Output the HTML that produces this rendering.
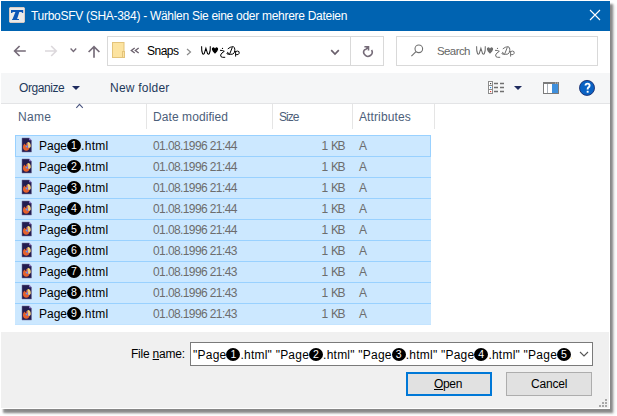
<!DOCTYPE html>
<html><head><meta charset="utf-8">
<style>
html,body{margin:0;padding:0;background:#fff;width:617px;height:416px;overflow:hidden;position:relative;font-family:"Liberation Sans",sans-serif;}
.a{position:absolute;}
.t{position:absolute;white-space:pre;font-size:12px;line-height:14px;}
#win{left:0;top:0;width:610px;height:409px;background:#fff;box-shadow:3px 4px 2px 0px rgba(0,0,0,0.42), 5px 5px 3px 0px rgba(0,0,0,0.08);}
#title{left:1px;top:1px;width:609px;height:30px;background:#0063B1;}
#tb{left:1px;top:73px;width:609px;height:30px;background:#F5F6F7;border-bottom:1px solid #E3E4E6;}
#bottom{left:1px;top:332px;width:608px;height:76px;background:#F0F0F0;}
.sel{left:15px;width:416px;height:20px;background:#CCE8FF;border-top:1px solid #99D1FF;}
.sep{width:1px;height:25px;top:104px;background:#E5E5E5;}
.hdr{color:#4C607A;}
.nm{color:#000;}
.gr{color:#6D6D6D;}
.cn{display:inline-block;width:14px;height:13px;border-radius:50%;background:#000;color:#fff;font-size:10.5px;line-height:13px;text-align:center;vertical-align:-2px;margin:0;overflow:hidden;}
.dot{position:absolute;width:2px;height:2px;background:#A8A8A8;}
</style></head><body>
<svg width="0" height="0" style="position:absolute"><defs>
<symbol id="wsym" viewBox="198 44 44 16">
  <path d="M201.6 46.3 Q201.4 51 202.6 53.9 Q203.4 54.4 204.2 53.6 L205.9 48.3 L207.6 53.6 Q208.4 54.4 209.2 53.9 Q210.6 51 210.3 46.3" fill="none" stroke="currentColor" stroke-width="1.05"/>
  <path d="M215 48.6 Q213.9 47 212.8 47.4 Q211.6 47.9 211.9 49.6 Q212.3 51.3 215 53.7 Q217.7 51.3 218.1 49.6 Q218.4 47.9 217.2 47.4 Q216.1 47 215 48.6 Z" fill="currentColor"/>
  <circle cx="222.5" cy="48.4" r="0.6" fill="currentColor"/>
  <path d="M220 50.3 Q222.5 50.2 224.3 51.3 Q221.5 52.8 220.6 55 Q220.4 57.2 222.6 57.3 H225.2" fill="none" stroke="currentColor" stroke-width="1"/>
  <path d="M227.8 48.9 Q230 46.8 233.4 46.6 Q235.8 48.6 234.2 52.8 Q233.3 54.4 230.6 54.4 Q228.6 54.5 227.2 54 Q226.6 53 227.6 52.4 Q228.6 52.6 228.5 53.8 M232.3 47.4 L229.6 54.2" fill="none" stroke="currentColor" stroke-width="1"/>
  <path d="M235.6 51 V56.6 M235.6 51.6 Q237.6 50.5 239 51.6 Q239.8 53.4 238.3 54.4 Q236.8 55 235.6 54.3" fill="none" stroke="currentColor" stroke-width="0.95"/>
</symbol>
<symbol id="ficon" viewBox="20 136 14 18">
  <path d="M22 138 H29.2 L31.5 140.3 V152 H22 Z" fill="#231D50" stroke="#77739A" stroke-width="0.5"/>
  <path d="M29.2 138 V140.3 H31.5 Z" fill="#A285E0"/>
  <path d="M26.3 143 Q29.6 143.4 29.6 147 Q29.4 150.6 26.2 150.7 Q23 150.5 22.9 147 Q23 144.4 24.6 143.4 Q25 145 26.3 145 Z" fill="#E6612B"/>
  <path d="M27.6 142 Q29 141.6 30 143 Q31 144.6 30.8 146.6 Q30.2 148.2 28.4 147.8 Q27.2 146.5 27.4 144.4 Z" fill="#F3D07A"/>
  <path d="M27.6 144.4 V148.2" stroke="#7E5FD6" stroke-width="0.9"/>
  <circle cx="26.4" cy="146.6" r="0.8" fill="#4FA8F2"/>
</symbol></defs></svg>
<div id="win" class="a"></div>
<div id="title" class="a"></div>
<!-- app icon -->
<svg class="a" style="left:9px;top:7px" width="16" height="16" viewBox="0 0 16 16">
  <path d="M1 0.5 H15 L15.5 1 V15 L15 15.5 H1 L0.5 15 V1 Z" fill="#E9E9E9" stroke="#D9CBC3" stroke-width="1"/>
  <path d="M2 3.1 H14.2 V6.1 H13.3 Q13 5 12 4.9 H10.3 L8.1 12 H10 V13.1 H3.1 V12 H3.6 L6.4 4.9 H4.6 Q3.3 5 3.1 5.9 H2 Z" fill="#0A55B6"/>
</svg>
<div class="t" style="left:31px;top:9px;color:#fff;font-size:12px;letter-spacing:-0.286px;">TurboSFV (SHA-384) - Wählen Sie eine oder mehrere Dateien</div>
<!-- close X -->
<svg class="a" style="left:589px;top:9px" width="12" height="12" viewBox="0 0 12 12"><path d="M1 1 L11 11 M11 1 L1 11" stroke="#fff" stroke-width="1.1"/></svg>

<!-- nav arrows -->
<svg class="a" style="left:0px;top:31px" width="105" height="35" viewBox="0 31 105 35">
  <path d="M14.6 51 H25.8 M19.6 46 L14.6 51 L19.6 56" fill="none" stroke="#756B78" stroke-width="1.65" stroke-linecap="butt"/>
  <path d="M56.2 51 H45 M51.2 46 L56.2 51 L51.2 56" fill="none" stroke="#DCD8DC" stroke-width="1.65"/>
  <path d="M70.6 48.6 L73.4 51.4 L76.2 48.6" fill="none" stroke="#756B78" stroke-width="1.4"/>
  <path d="M94 57.8 V46.8 M88.6 52 L94 46.6 L99.4 52" fill="none" stroke="#756B78" stroke-width="1.65"/>
</svg>
<!-- address box -->
<div class="a" style="left:107px;top:36px;width:275px;height:28px;border:1px solid #D9D9D9;background:#fff;"></div>
<div class="a" style="left:350px;top:37px;width:1px;height:28px;background:#D9D9D9;"></div>
<svg class="a" style="left:112px;top:42px" width="14" height="17" viewBox="0 0 14 17">
  <rect x="0.5" y="0.5" width="11.5" height="15" fill="#FCE3A0" stroke="#E3C37A"/>
  <rect x="10.5" y="9.5" width="2" height="6" fill="#FCE3A0" stroke="#E3C37A"/>
</svg>
<svg class="a" style="left:126px;top:40px" width="20" height="20" viewBox="126 40 20 20"><path d="M134.7 47.9 L131.3 50.4 L134.7 52.9 M138.7 47.9 L135.3 50.4 L138.7 52.9" fill="none" stroke="#6A606C" stroke-width="1.3"/></svg>
<div class="t" style="left:147px;top:44px;color:#000;font-size:12px;letter-spacing:-0.5px;">Snaps</div>
<svg class="a" style="left:186px;top:48px" width="6" height="8" viewBox="0 0 6 8"><path d="M1 1 L4.5 4 L1 7" fill="none" stroke="#8A8A8A" stroke-width="1.2"/></svg>
<svg class="a" style="left:198px;top:44px;color:#000" width="44" height="16"><use href="#wsym"/></svg>
<svg class="a" style="left:330px;top:48px" width="10" height="8" viewBox="0 0 10 8"><path d="M1.2 2.2 L5 6 L8.8 2.2" fill="none" stroke="#6A606C" stroke-width="1.7"/></svg>
<svg class="a" style="left:356px;top:40px" width="24" height="22" viewBox="356 40 24 22"><path d="M364.9 49.2 A4.2 4.2 0 1 0 371.6 50" fill="none" stroke="#756B78" stroke-width="1.6"/><path d="M364.4 46.7 H368.5 V50.6 M368.3 46.9 L365.2 50" fill="none" stroke="#756B78" stroke-width="1.6"/></svg>

<!-- search -->
<div class="a" style="left:396px;top:36px;width:200px;height:28px;border:1px solid #D9D9D9;background:#fff;"></div>
<svg class="a" style="left:406px;top:42px" width="22" height="18" viewBox="406 42 22 18"><circle cx="418.8" cy="48.8" r="3.8" fill="none" stroke="#707070" stroke-width="1.1"/><path d="M416 51.6 L411.4 56.2" stroke="#707070" stroke-width="1.1"/></svg>
<div class="t" style="left:437px;top:43.5px;color:#666666;font-size:11.5px;letter-spacing:-0.6px;">Search</div>
<svg class="a" style="left:473px;top:44px;color:#6D6D6D" width="44" height="16"><use href="#wsym"/></svg>

<!-- toolbar -->
<div id="tb" class="a"></div>
<div class="t" style="left:19px;top:81px;color:#1E395B;font-size:12px;letter-spacing:-0.43px;">Organize</div>
<svg class="a" style="left:72px;top:86px" width="8" height="4" viewBox="0 0 8 4"><path d="M0 0 H8 L4 4 Z" fill="#1E2B5E"/></svg>
<div class="t" style="left:110px;top:81px;color:#1E395B;font-size:12px;letter-spacing:0.22px;">New folder</div>
<svg class="a" style="left:488px;top:81px" width="17" height="13" viewBox="0 0 17 13">
  <rect x="0.5" y="0.5" width="4" height="4" fill="#fff" stroke="#8C8C8C"/><rect x="0.5" y="4.5" width="4" height="4" fill="#fff" stroke="#8C8C8C"/><rect x="0.5" y="8.5" width="4" height="4" fill="#fff" stroke="#8C8C8C"/>
  <rect x="2" y="2" width="1.2" height="1.2" fill="#444"/><rect x="2" y="6" width="1.2" height="1.2" fill="#2F8FE8"/><rect x="2" y="10" width="1.2" height="1.2" fill="#D9453B"/>
  <path d="M6 2.5 H10 M12 2.5 H16 M6 6.5 H10 M12 6.5 H16 M6 10.5 H10 M12 10.5 H16" stroke="#707070" stroke-width="1.3"/>
</svg>
<svg class="a" style="left:514px;top:86px" width="8" height="4" viewBox="0 0 8 4"><path d="M0 0 H8 L4 4 Z" fill="#1E2B5E"/></svg>
<svg class="a" style="left:543px;top:82px" width="16" height="12" viewBox="0 0 16 12">
  <rect x="0" y="0" width="16" height="12" fill="#7B7B7B"/>
  <rect x="1" y="2" width="14" height="9" fill="#fff"/>
  <rect x="4" y="2" width="1" height="9" fill="#A9B1BA"/>
  <rect x="9" y="2" width="6" height="9" fill="#3E8FDC"/>
  <rect x="12" y="0.6" width="1" height="0.9" fill="#D8D8D8"/><rect x="14" y="0.6" width="1" height="0.9" fill="#D8D8D8"/>
</svg>
<svg class="a" style="left:576px;top:78px" width="22" height="20" viewBox="576 78 22 20">
  <circle cx="587" cy="87.9" r="7.5" fill="#0A62C4" stroke="#1B2E6E" stroke-width="0.9"/>
  <path d="M585.5 85.6 Q585.5 83.6 587.6 83.6 Q589.6 83.6 589.6 85.4 Q589.6 86.7 588.4 87.4 Q587.6 87.9 587.6 89.6" fill="none" stroke="#fff" stroke-width="1.9"/>
  <rect x="586.7" y="90.8" width="1.9" height="1.9" fill="#fff"/>
</svg>

<!-- header -->
<svg class="a" style="left:70px;top:100px" width="20" height="12" viewBox="70 100 20 12"><path d="M76.3 107.8 L79.5 104.4 L82.8 107.8" fill="none" stroke="#4A5580" stroke-width="1.1"/></svg>
<div class="t hdr" style="left:18px;top:110px;letter-spacing:0.33px;">Name</div>
<div class="a sep" style="left:146px;"></div>
<div class="t hdr" style="left:153px;top:110px;letter-spacing:0.08px;">Date modified</div>
<div class="a sep" style="left:272px;"></div>
<div class="t hdr" style="left:279px;top:110px;font-size:12px;letter-spacing:-1px;">Size</div>
<div class="a sep" style="left:352px;"></div>
<div class="t hdr" style="left:359px;top:110px;letter-spacing:0.11px;">Attributes</div>
<div class="a sep" style="left:434px;"></div>

<div id="rows">
<div class="a sel" style="top:135px;border:1px solid #99D1FF;width:414px;"></div>
<svg class="a fi" style="left:20px;top:136px" width="14" height="18"><use href="#ficon"/></svg>
<div class="t nm" style="left:39px;top:139px;">Page<span class="cn">1</span><span style="letter-spacing:0.3px">.html</span></div>
<div class="t gr" style="left:153px;top:139px;font-size:12px;letter-spacing:-0.6px;">01.08.1996 21:44</div>
<div class="t gr" style="left:321.5px;top:139px;font-size:12px;">1</div>
<div class="t gr" style="left:331px;top:139px;font-size:12px;letter-spacing:-1.5px;">KB</div>
<div class="t gr" style="left:359px;top:139px;font-size:12px;">A</div>
<div class="a sel" style="top:156px;"></div>
<svg class="a fi" style="left:20px;top:157px" width="14" height="18"><use href="#ficon"/></svg>
<div class="t nm" style="left:39px;top:160px;">Page<span class="cn">2</span><span style="letter-spacing:0.3px">.html</span></div>
<div class="t gr" style="left:153px;top:160px;font-size:12px;letter-spacing:-0.6px;">01.08.1996 21:44</div>
<div class="t gr" style="left:321.5px;top:160px;font-size:12px;">1</div>
<div class="t gr" style="left:331px;top:160px;font-size:12px;letter-spacing:-1.5px;">KB</div>
<div class="t gr" style="left:359px;top:160px;font-size:12px;">A</div>
<div class="a sel" style="top:177px;"></div>
<svg class="a fi" style="left:20px;top:178px" width="14" height="18"><use href="#ficon"/></svg>
<div class="t nm" style="left:39px;top:181px;">Page<span class="cn">3</span><span style="letter-spacing:0.3px">.html</span></div>
<div class="t gr" style="left:153px;top:181px;font-size:12px;letter-spacing:-0.6px;">01.08.1996 21:44</div>
<div class="t gr" style="left:321.5px;top:181px;font-size:12px;">1</div>
<div class="t gr" style="left:331px;top:181px;font-size:12px;letter-spacing:-1.5px;">KB</div>
<div class="t gr" style="left:359px;top:181px;font-size:12px;">A</div>
<div class="a sel" style="top:198px;"></div>
<svg class="a fi" style="left:20px;top:199px" width="14" height="18"><use href="#ficon"/></svg>
<div class="t nm" style="left:39px;top:202px;">Page<span class="cn">4</span><span style="letter-spacing:0.3px">.html</span></div>
<div class="t gr" style="left:153px;top:202px;font-size:12px;letter-spacing:-0.6px;">01.08.1996 21:44</div>
<div class="t gr" style="left:321.5px;top:202px;font-size:12px;">1</div>
<div class="t gr" style="left:331px;top:202px;font-size:12px;letter-spacing:-1.5px;">KB</div>
<div class="t gr" style="left:359px;top:202px;font-size:12px;">A</div>
<div class="a sel" style="top:219px;"></div>
<svg class="a fi" style="left:20px;top:220px" width="14" height="18"><use href="#ficon"/></svg>
<div class="t nm" style="left:39px;top:223px;">Page<span class="cn">5</span><span style="letter-spacing:0.3px">.html</span></div>
<div class="t gr" style="left:153px;top:223px;font-size:12px;letter-spacing:-0.6px;">01.08.1996 21:44</div>
<div class="t gr" style="left:321.5px;top:223px;font-size:12px;">1</div>
<div class="t gr" style="left:331px;top:223px;font-size:12px;letter-spacing:-1.5px;">KB</div>
<div class="t gr" style="left:359px;top:223px;font-size:12px;">A</div>
<div class="a sel" style="top:240px;"></div>
<svg class="a fi" style="left:20px;top:241px" width="14" height="18"><use href="#ficon"/></svg>
<div class="t nm" style="left:39px;top:244px;">Page<span class="cn">6</span><span style="letter-spacing:0.3px">.html</span></div>
<div class="t gr" style="left:153px;top:244px;font-size:12px;letter-spacing:-0.6px;">01.08.1996 21:43</div>
<div class="t gr" style="left:321.5px;top:244px;font-size:12px;">1</div>
<div class="t gr" style="left:331px;top:244px;font-size:12px;letter-spacing:-1.5px;">KB</div>
<div class="t gr" style="left:359px;top:244px;font-size:12px;">A</div>
<div class="a sel" style="top:261px;"></div>
<svg class="a fi" style="left:20px;top:262px" width="14" height="18"><use href="#ficon"/></svg>
<div class="t nm" style="left:39px;top:265px;">Page<span class="cn">7</span><span style="letter-spacing:0.3px">.html</span></div>
<div class="t gr" style="left:153px;top:265px;font-size:12px;letter-spacing:-0.6px;">01.08.1996 21:43</div>
<div class="t gr" style="left:321.5px;top:265px;font-size:12px;">1</div>
<div class="t gr" style="left:331px;top:265px;font-size:12px;letter-spacing:-1.5px;">KB</div>
<div class="t gr" style="left:359px;top:265px;font-size:12px;">A</div>
<div class="a sel" style="top:282px;"></div>
<svg class="a fi" style="left:20px;top:283px" width="14" height="18"><use href="#ficon"/></svg>
<div class="t nm" style="left:39px;top:286px;">Page<span class="cn">8</span><span style="letter-spacing:0.3px">.html</span></div>
<div class="t gr" style="left:153px;top:286px;font-size:12px;letter-spacing:-0.6px;">01.08.1996 21:43</div>
<div class="t gr" style="left:321.5px;top:286px;font-size:12px;">1</div>
<div class="t gr" style="left:331px;top:286px;font-size:12px;letter-spacing:-1.5px;">KB</div>
<div class="t gr" style="left:359px;top:286px;font-size:12px;">A</div>
<div class="a sel" style="top:303px;border-bottom:1px solid #C4E4FF;"></div>
<svg class="a fi" style="left:20px;top:304px" width="14" height="18"><use href="#ficon"/></svg>
<div class="t nm" style="left:39px;top:307px;">Page<span class="cn">9</span><span style="letter-spacing:0.3px">.html</span></div>
<div class="t gr" style="left:153px;top:307px;font-size:12px;letter-spacing:-0.6px;">01.08.1996 21:43</div>
<div class="t gr" style="left:321.5px;top:307px;font-size:12px;">1</div>
<div class="t gr" style="left:331px;top:307px;font-size:12px;letter-spacing:-1.5px;">KB</div>
<div class="t gr" style="left:359px;top:307px;font-size:12px;">A</div>
</div>

<!-- bottom -->
<div id="bottom" class="a"></div>
<div class="t" style="left:131px;top:347px;color:#000;font-size:12px;letter-spacing:-0.22px;">File <u>n</u>ame:</div>
<div class="a" style="left:190px;top:342px;width:401px;height:22px;border:1px solid #7A7A7A;background:#fff;overflow:hidden;"></div>
<div class="a" style="left:191px;top:343px;width:381px;height:22px;overflow:hidden;"><div class="t" style="left:2px;top:5px;color:#000;letter-spacing:0.23px;">"Page<span class="cn">1</span>.html" "Page<span class="cn">2</span>.html" "Page<span class="cn">3</span>.html" "Page<span class="cn">4</span>.html" "Page<span class="cn">5</span>.html"</div></div>
<svg class="a" style="left:579px;top:351px" width="10" height="7" viewBox="0 0 10 7"><path d="M1 1 L5 5 L9 1" fill="none" stroke="#555" stroke-width="1.1"/></svg>
<div class="a" style="left:406px;top:372px;width:82px;height:20px;border:2px solid #0078D7;background:#E1E1E1;"></div>
<div class="t" style="left:434px;top:376.5px;color:#000;letter-spacing:-0.33px;"><u>O</u>pen</div>
<div class="a" style="left:506px;top:372px;width:84px;height:22px;border:1px solid #ADADAD;background:#E1E1E1;"></div>
<div class="t" style="left:531px;top:376.5px;color:#000;font-size:12px;letter-spacing:-0.2px;">Cancel</div>
<div class="dot" style="left:605px;top:399px"></div>
<div class="dot" style="left:602px;top:402px"></div><div class="dot" style="left:605px;top:402px"></div>
<div class="dot" style="left:599px;top:405px"></div><div class="dot" style="left:602px;top:405px"></div><div class="dot" style="left:605px;top:405px"></div>
</body></html>
